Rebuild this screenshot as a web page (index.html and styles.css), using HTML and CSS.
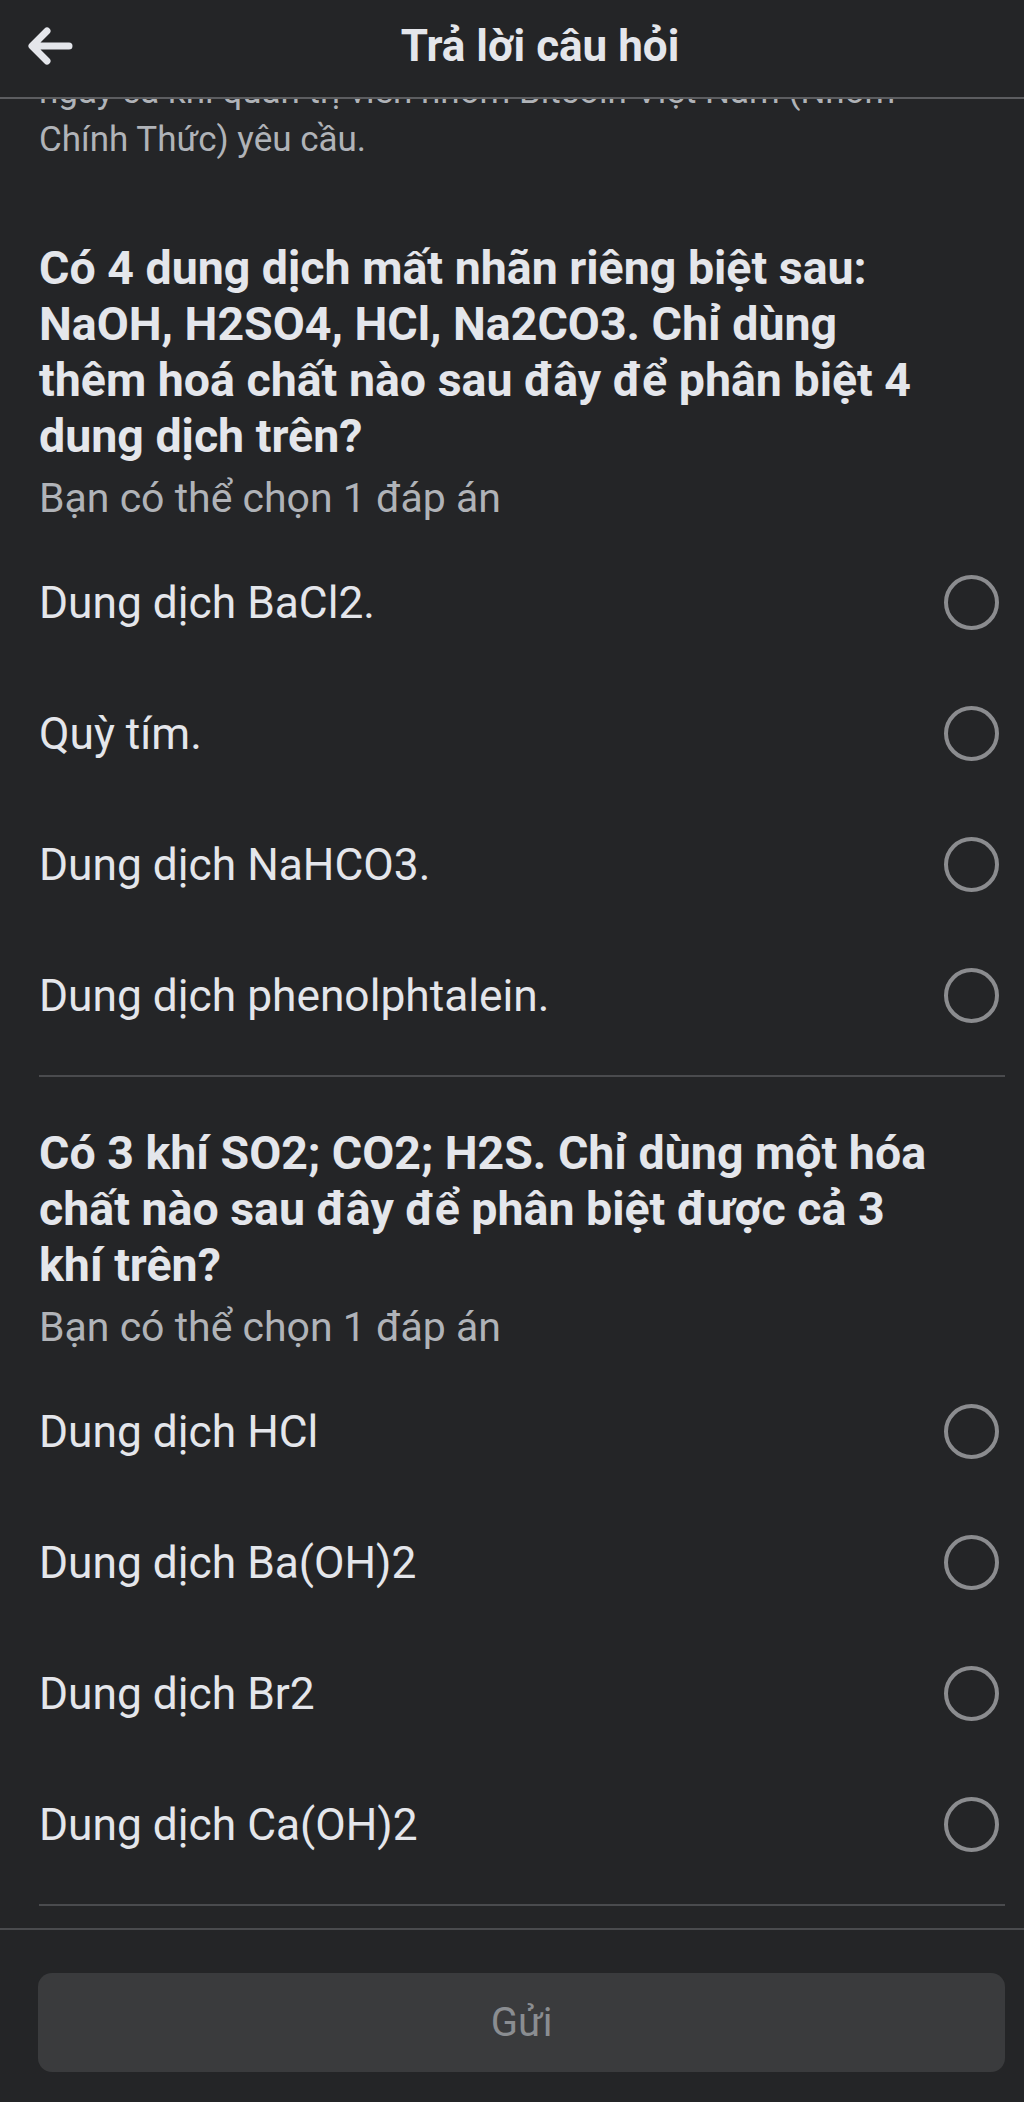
FILE: index.html
```html
<!DOCTYPE html>
<html lang="vi">
<head>
  <meta charset="UTF-8">
  <title>Trả lời câu hỏi</title>
  <link rel="stylesheet" href="styles.css">
</head>
<body>
  <header class="topbar">
    <button class="back" aria-label="Quay lại">
      <svg width="46" height="40" viewBox="0 0 46 40"><path d="M42 20H6M20 5L5 20l15 15" fill="none" stroke="#e4e6eb" stroke-width="7" stroke-linecap="round" stroke-linejoin="round"/></svg>
    </button>
    <h1 class="title">Trả lời câu hỏi</h1>
  </header>

  <main class="scroll">
    <p class="intro">ngày cả khi quản trị viên nhóm Bitcoin Việt Nam (Nhóm<br>Chính Thức) yêu cầu.</p>

    <section class="question">
      <h2 class="q-text">Có 4 dung dịch mất nhãn riêng biệt sau: NaOH, H2SO4, HCl, Na2CO3. Chỉ dùng thêm hoá chất nào sau đây để phân biệt 4 dung dịch trên?</h2>
      <p class="hint">Bạn có thể chọn 1 đáp án</p>
      <ul class="options">
        <li class="option"><span>Dung dịch BaCl2.</span><i class="radio"></i></li>
        <li class="option"><span>Quỳ tím.</span><i class="radio"></i></li>
        <li class="option"><span>Dung dịch NaHCO3.</span><i class="radio"></i></li>
        <li class="option"><span>Dung dịch phenolphtalein.</span><i class="radio"></i></li>
      </ul>
    </section>

    <section class="question">
      <h2 class="q-text">Có 3 khí SO2; CO2; H2S. Chỉ dùng một hóa chất nào sau đây để phân biệt được cả 3 khí trên?</h2>
      <p class="hint">Bạn có thể chọn 1 đáp án</p>
      <ul class="options">
        <li class="option"><span>Dung dịch HCl</span><i class="radio"></i></li>
        <li class="option"><span>Dung dịch Ba(OH)2</span><i class="radio"></i></li>
        <li class="option"><span>Dung dịch Br2</span><i class="radio"></i></li>
        <li class="option"><span>Dung dịch Ca(OH)2</span><i class="radio"></i></li>
      </ul>
    </section>
  </main>

  <footer class="bottombar">
    <button class="send" disabled>Gửi</button>
  </footer>
</body>
</html>
```

FILE: styles.css
```css
* { box-sizing: border-box; }
body { margin: 0; background: #242527; color: #e4e6eb; font-family: Roboto, "Noto Sans", sans-serif; width: 1024px; height: 2102px; overflow: hidden; }

.topbar { height: 99px; display: flex; align-items: center; padding: 0 44px 6px 27px; border-bottom: 2px solid #5c5d60; position: relative; z-index: 1; background: #242527; }
.back { width: 73px; height: 46px; padding: 0; border: none; background: none; display: flex; align-items: center; }
.title { flex: 1; margin: 0; text-align: center; font-size: 44px; font-weight: 700; }

.scroll { overflow: hidden; }
.intro { margin: -31px 0 0; padding: 0 19px 0 39px; font-size: 35px; line-height: 48px; color: #b0b3b8; }

.question { margin: 0 19px 0 39px; border-bottom: 2px solid #4a4b4e; padding-bottom: 14px; }
.question:first-of-type { padding-top: 76px; }
.question + .question { padding-top: 48px; }
.q-text { margin: 0; padding-right: 63px; font-size: 46.5px; line-height: 56px; font-weight: 700; }
.hint { margin: 10px 0 0; font-size: 41px; line-height: 48px; color: #b0b3b8; }

.options { list-style: none; margin: 15px 0 0; padding: 0; }
.option { height: 131px; display: flex; align-items: center; justify-content: space-between; font-size: 44.3px; }
.radio { width: 55px; height: 55px; border: 4px solid #8b8c8f; border-radius: 50%; margin-right: 6px; }

.bottombar { margin-top: 22px; border-top: 2px solid #4a4b4e; padding: 43px 19px 0 38px; }
.send { width: 100%; height: 99px; border: none; border-radius: 14px; background: #3a3b3d; color: #8a8d91; font-family: inherit; font-size: 40px; }
```
